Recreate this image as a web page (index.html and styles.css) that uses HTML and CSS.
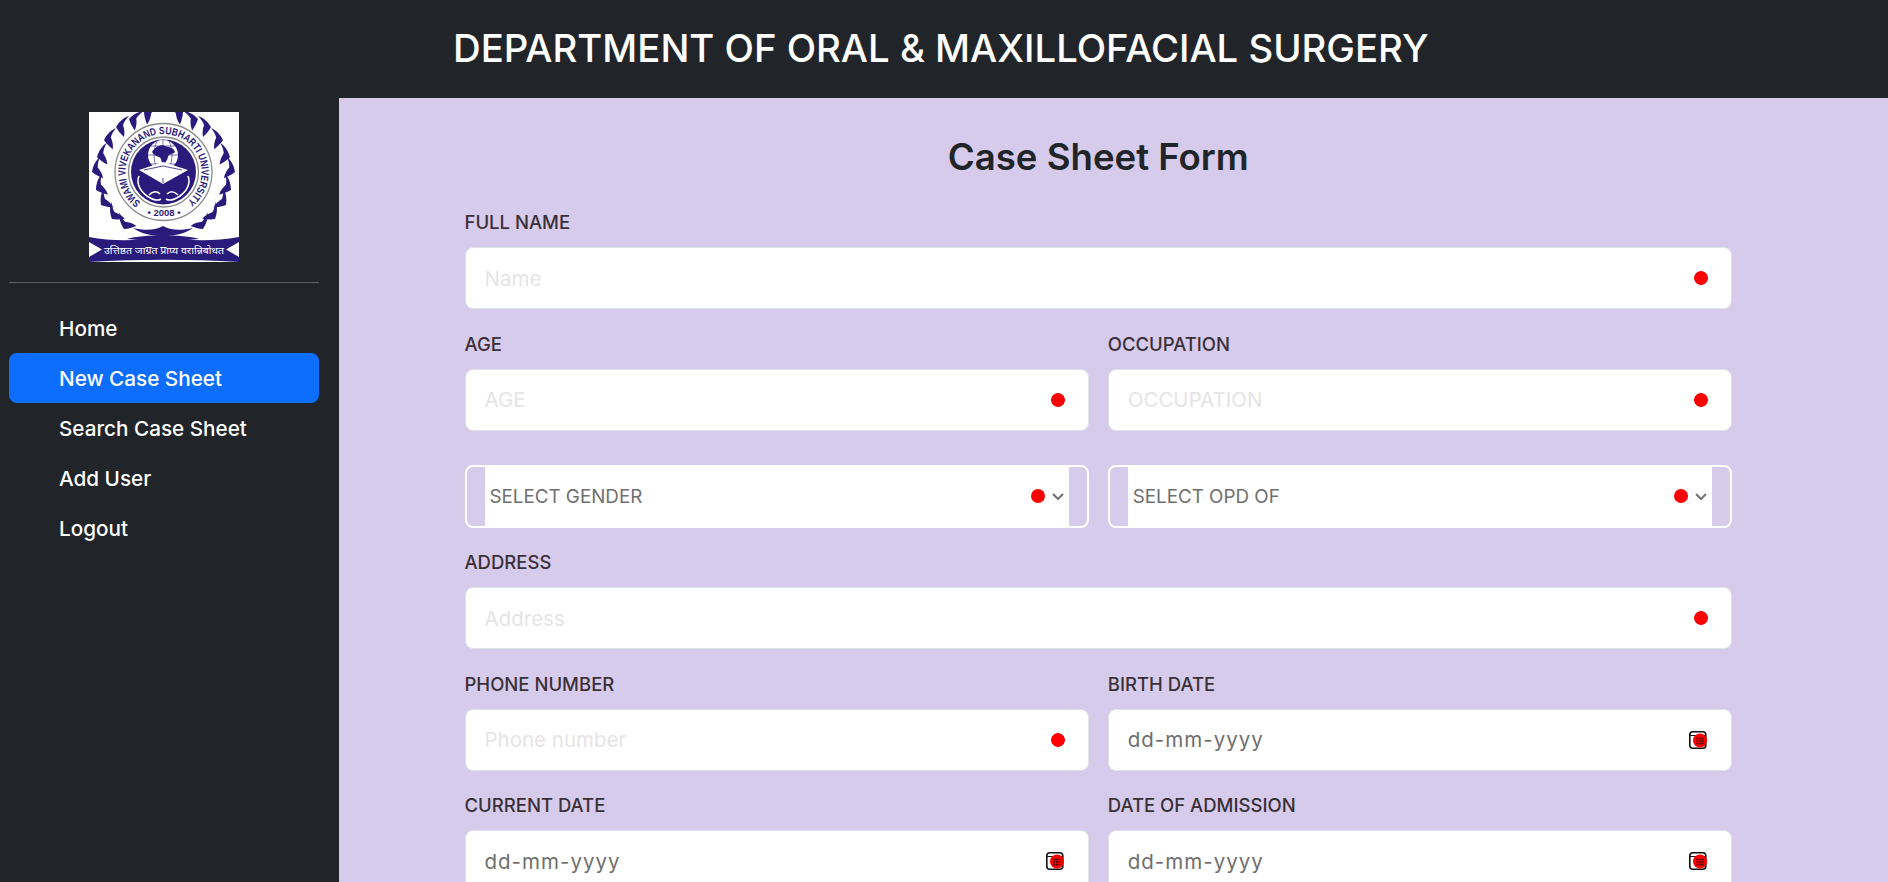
FILE: index.html
```html
<!DOCTYPE html>
<html>
<head>
    <title>Case Sheet Form</title>
    <meta charset="utf-8">
    <link rel="stylesheet" href="styles.css">
</head>
<body>
    <header class="topbar">
        <h1>DEPARTMENT OF ORAL &amp; MAXILLOFACIAL SURGERY</h1>
    </header>
    <div class="page">
        <aside class="sidebar">
            <div class="logo">
                <svg width="150" height="150" viewBox="0 0 150 150">
                    <defs>
                        <path id="leaf" d="M0 0C3-5 7-9 13-11C10-8 8-5 7-2C8 1 9 5 8 10C5 7 2 4 0 0Z"/>
                        <path id="ring" d="M74.5 22A38 38 0 1 1 74.4 22"/>
                        <g id="wreath">
                            <use href="#leaf" transform="translate(3 60) rotate(-22)"/>
                            <use href="#leaf" transform="translate(8 45) rotate(-15)"/>
                            <use href="#leaf" transform="translate(15 28) rotate(-5)"/>
                            <use href="#leaf" transform="translate(27 15)"/>
                            <use href="#leaf" transform="translate(40 7) rotate(12)"/>
                            <use href="#leaf" transform="translate(55 0) rotate(25)"/>
                            <use href="#leaf" transform="translate(7 78) rotate(-30)"/>
                            <use href="#leaf" transform="translate(12 93) rotate(-40)"/>
                            <use href="#leaf" transform="translate(23 107) rotate(-52)"/>
                            <use href="#leaf" transform="translate(35 117) rotate(-65)"/>
                        </g>
                    </defs>
                    <rect width="150" height="150" fill="#fff"/>
                    <g fill="#2a1a7c">
                        <use href="#wreath"/>
                        <use href="#wreath" transform="matrix(-1 0 0 1 149 0)"/>
                        <path d="M44 116C56 119 68 118 74 114C80 118 92 119 104 116C96 122 84 124 74 124C64 124 52 122 44 116Z"/>
                        <path d="M0 125C25 130 50 128 74 126C98 128 123 130 150 125V130L137 137.500L150 145V150C100 147 50 147 0 150V145L13 137.500L0 130Z"/>
                        <path d="M38 127C55 122 93 122 110 127C90 129 58 129 38 127Z"/>
                    </g>
                    <circle cx="74.500" cy="60" r="48.500" fill="none" stroke="#8c8c8c" stroke-width="1.300"/>
                    <circle cx="74.500" cy="60" r="35" fill="none" stroke="#8c8c8c" stroke-width="1.300"/>
                    <circle cx="74.500" cy="60" r="32.500" fill="#2a1a7c"/>
                    <text class="logo-ring" fill="#2a1a7c" transform="rotate(-143 74.500 60)"><textPath href="#ring" textLength="188" lengthAdjust="spacingAndGlyphs">SWAMI VIVEKANAND SUBHARTI UNIVERSITY</textPath></text>
                    <text class="logo-year" x="75" y="104" text-anchor="middle" fill="#2a1a7c">• 2008 •</text>
                    <circle cx="74" cy="43" r="15" fill="#fff"/>
                    <path d="M63 40c3-5 9-8 13-6 4 1 9 2 10 6-3 3-6 1-7 5-1 4-3 6-5 8-2-3-1-7-4-8-3-1-5-2-7-5Z" fill="#2a1a7c"/>
                    <path d="M59 43H89M74 28V58M62 34H86M62 52H86M68 29C64 38 64 48 68 57M80 29C84 38 84 48 80 57" fill="none" stroke="#2a1a7c" stroke-width=".6"/>
                    <path d="M50 58L74 50L99 58L74 72Z" fill="#fff"/>
                    <path d="M55 58L74 54L93 58M74 66V71" fill="none" stroke="#2a1a7c" stroke-width=".8"/>
                    <path d="M50 64C47 71 51 79 58 84C64 88 69 89 72 87M99 64C102 71 98 79 91 84C85 88 80 89 77 87M60 83C64 79 68 79 71 82M89 83C85 79 81 79 78 82" fill="none" stroke="#fff" stroke-width="1.600"/>
                    <text class="logo-motto" x="75" y="141.500" text-anchor="middle" fill="#fff" textLength="120" lengthAdjust="spacingAndGlyphs">उत्तिष्ठत जाग्रत प्राप्य वरान्निबोधत</text>
                </svg>
            </div>
            <hr class="rule">
            <nav class="menu">
                <a href="#">Home</a>
                <a href="#" class="active">New Case Sheet</a>
                <a href="#">Search Case Sheet</a>
                <a href="#">Add User</a>
                <a href="#">Logout</a>
            </nav>
        </aside>
        <main class="content">
            <h2>Case Sheet Form</h2>
            <form class="case-form">
                <div class="field wide">
                    <label for="name">FULL NAME</label>
                    <input type="text" id="name" placeholder="Name">
                </div>
                <div class="field">
                    <label for="age">AGE</label>
                    <input type="text" id="age" placeholder="AGE">
                </div>
                <div class="field">
                    <label for="occupation">OCCUPATION</label>
                    <input type="text" id="occupation" placeholder="OCCUPATION">
                </div>
                <div class="select-box">
                    <div class="select-inner">
                        <span>SELECT GENDER</span>
                        <i class="dot"></i>
                        <svg class="chevron" width="14" height="8" viewBox="0 0 14 8"><path d="M2 2l5 5 5-5" fill="none" stroke="#707070" stroke-width="2"/></svg>
                    </div>
                </div>
                <div class="select-box">
                    <div class="select-inner">
                        <span>SELECT OPD OF</span>
                        <i class="dot"></i>
                        <svg class="chevron" width="14" height="8" viewBox="0 0 14 8"><path d="M2 2l5 5 5-5" fill="none" stroke="#707070" stroke-width="2"/></svg>
                    </div>
                </div>
                <div class="field wide">
                    <label for="address">ADDRESS</label>
                    <input type="text" id="address" placeholder="Address">
                </div>
                <div class="field">
                    <label for="phone">PHONE NUMBER</label>
                    <input type="text" id="phone" placeholder="Phone number">
                </div>
                <div class="field">
                    <label>BIRTH DATE</label>
                    <div class="date-box">
                        <span>dd-mm-yyyy</span>
                        <svg class="cal-icon" width="18" height="18" viewBox="0 0 18 18"><use href="#cal"/></svg>
                    </div>
                </div>
                <div class="field">
                    <label>CURRENT DATE</label>
                    <div class="date-box">
                        <span>dd-mm-yyyy</span>
                        <svg class="cal-icon" width="18" height="18" viewBox="0 0 18 18"><use href="#cal"/></svg>
                    </div>
                </div>
                <div class="field">
                    <label>DATE OF ADMISSION</label>
                    <div class="date-box">
                        <span>dd-mm-yyyy</span>
                        <svg class="cal-icon" width="18" height="18" viewBox="0 0 18 18"><use href="#cal"/></svg>
                    </div>
                </div>
            </form>
        </main>
    </div>
    <svg width="0" height="0" class="sprites">
        <g id="cal">
            <rect x="0.800" y="0.800" width="16" height="16.500" rx="3" fill="#fff" stroke="#111" stroke-width="1.600"/>
            <path d="M1 4.500H17" stroke="#111" stroke-width="1"/>
            <circle cx="11" cy="9.500" r="7" fill="#f00"/>
            <path d="M7.500 7.500H14.500M7.500 10H14.500M7.500 12.500H14.500" stroke="#200" stroke-width="1.700" stroke-dasharray="1.700 .9"/>
        </g>
    </svg>
</body>
</html>
```

FILE: styles.css
```css
html, body {
    margin: 0;
    height: 100%;
    overflow: hidden;
}
body {
    font-family: "Inter", "Liberation Sans", sans-serif;
    background-color: #212529;
}
.sprites {
    position: absolute;
}
.topbar {
    height: 98px;
    box-sizing: border-box;
    padding: 0 0 2px 453px;
    display: flex;
    align-items: center;
}
.topbar h1 {
    margin: 0;
    font-size: 38.300px;
    font-weight: 500;
    color: #fff;
    white-space: nowrap;
}
.page {
    display: flex;
    height: calc(100% - 98px);
}
.sidebar {
    width: 339px;
    flex-shrink: 0;
    padding: 14px 20px 0 9px;
    box-sizing: border-box;
}
.logo {
    display: flex;
    justify-content: center;
}
.logo svg {
    display: block;
}
.logo-ring {
    font: bold 10.500px "Liberation Sans", sans-serif;
}
.logo-year {
    font: bold 9.500px "Liberation Sans", sans-serif;
}
.logo-motto {
    font: 10px "Noto Sans", "DejaVu Sans", sans-serif;
}
.rule {
    margin: 20px 0 20px;
    border: 0;
    border-top: 1px solid #5b5f63;
}
.menu a {
    display: block;
    height: 50px;
    line-height: 51px;
    padding-left: 50px;
    font-size: 20.700px;
    font-weight: 500;
    color: #fff;
    text-decoration: none;
    border-radius: 8px;
}
.menu a.active {
    background-color: #0d6efd;
}
.content {
    flex: 1;
    background-color: #d7cbeb;
    padding: 0 156px 0 125.500px;
}
.content h2 {
    margin: 0;
    height: 103px;
    line-height: 118px;
    box-sizing: border-box;
    text-align: center;
    font-size: 36.600px;
    font-weight: 600;
    color: #212529;
}
.case-form {
    display: grid;
    grid-template-columns: 1fr 1fr;
    column-gap: 19px;
    row-gap: 13.500px;
}
.field.wide {
    grid-column: 1 / 3;
}
.field label {
    display: block;
    height: 46px;
    line-height: 42px;
    font-size: 18.500px;
    font-weight: 500;
    color: #3a3038;
}
.field input, .date-box {
    display: flex;
    align-items: center;
    justify-content: space-between;
    width: 100%;
    height: 62px;
    box-sizing: border-box;
    padding: 0 19px;
    border: 1px solid #dee2e6;
    border-radius: 8px;
    font-family: inherit;
    font-size: 20.500px;
    color: #6f6f6f;
    outline: none;
    background: #fff radial-gradient(circle at calc(100% - 30px) 50%, #f00 6.500px, transparent 7.200px);
}
.date-box {
    background: #fff;
    padding-right: 24px;
    letter-spacing: 1px;
}
.cal-icon {
    overflow: visible;
}
.field input::placeholder {
    color: #e6e4e6;
    opacity: 1;
}
.select-box {
    height: 63px;
    box-sizing: border-box;
    padding: 0 18px;
    margin-top: 20.500px;
    border: 2px solid #fff;
    border-radius: 8px;
}
.select-inner {
    height: 100%;
    display: flex;
    align-items: center;
    padding: 0 4px 0 5px;
    background-color: #fff;
    font-size: 18.800px;
    color: #6f6f6f;
}
.select-inner span {
    flex: 1;
}
.dot {
    width: 14px;
    height: 14px;
    border-radius: 50%;
    background-color: #f00;
    margin-right: 6px;
}
```
